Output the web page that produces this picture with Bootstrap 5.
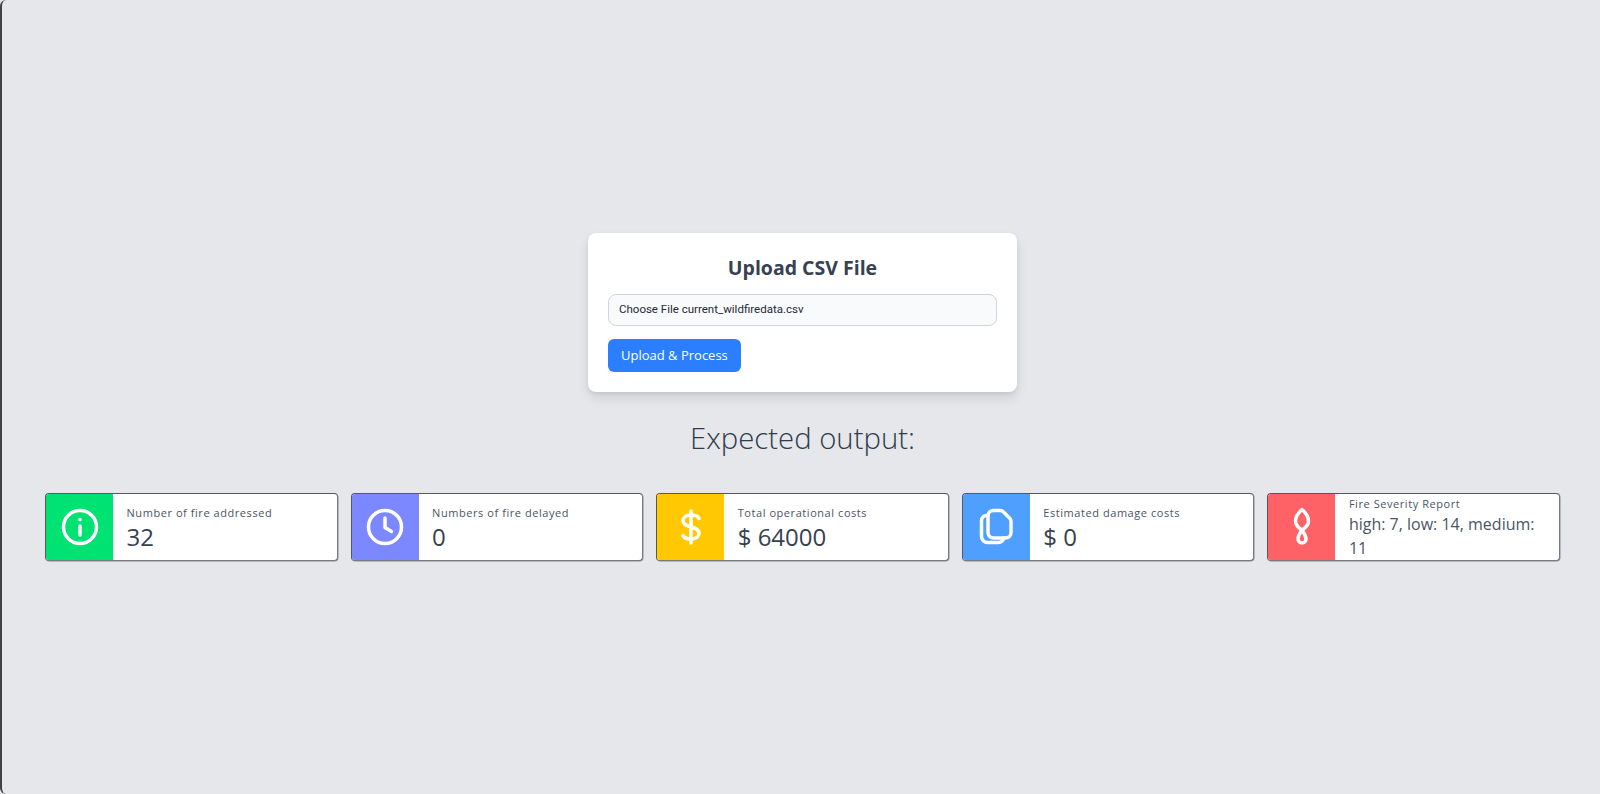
<!DOCTYPE html>
<html lang="en">
<head>
<meta charset="utf-8">
<title>Upload CSV File</title>
<link href="https://cdn.jsdelivr.net/npm/bootstrap@5.3.0/dist/css/bootstrap.min.css" rel="stylesheet">
<style>
html,body{height:100%;}
body{background:#e5e7eb;color:#374151;font-family:"Open Sans","Noto Sans",sans-serif;overflow:hidden;}
.page-shell{height:794px;border-left:2px solid #3f4145;border-radius:6px 0 0 6px;padding:0 40px 0 43px;}
.upload-box{width:429px;height:159px;background:#fff;border-radius:8px;padding:20px;box-shadow:0 6px 12px rgba(0,0,0,.1),0 2px 4px rgba(0,0,0,.06);}
.upload-title{font-size:19.5px;line-height:28px;font-weight:700;margin:1px 0 12px;color:#374151;}
.file-field{height:32px;border:1px solid #d1d5db;border-radius:8px;background:#f9fafb;padding:0 10px;font-family:Roboto,"Open Sans",sans-serif;font-size:11.5px;color:#1f2937;}
.go-btn{height:33px;padding:0 13px;background:#2b7fff;border:0;border-radius:6px;font-size:13px;color:#fff;margin-top:13px;}
.out-title{font-size:29.3px;line-height:40px;font-weight:300;margin:26px 0 35px;color:#2f3a4c;}
.stat-row{gap:13px;}
.stat-box{flex:1 1 0;height:68px;background:#fff;border:1px solid #55585e;border-right-color:#77797e;border-bottom-color:#77797e;border-radius:4px;overflow:hidden;min-width:0;box-shadow:.5px .5px 0 #8a8c90;}
.stat-icon{flex:0 0 67px;}
.stat-icon svg{fill:none;stroke:#fff;stroke-width:3.5;stroke-linecap:round;stroke-linejoin:round;}
.stat-body{padding:4px 13px 0 13.5px;min-width:0;}
.stat-body-tight{padding-top:2px;}
.stat-label{font-size:11px;line-height:16px;letter-spacing:.56px;color:#4b5563;}
.stat-value{font-size:24px;line-height:32px;color:#374151;}
.stat-value-sm{font-size:16px;line-height:24px;color:#4b5563;}
.ic-green{background:#00e272;}
.ic-violet{background:#7c88ff;}
.ic-yellow{background:#ffc800;}
.ic-blue{background:#4f9fff;}
.ic-red{background:#ff6266;}
</style>
</head>
<body>
<div class="page-shell d-flex flex-column justify-content-center align-items-center">
  <div class="upload-box">
    <h2 class="upload-title text-center">Upload CSV File</h2>
    <div class="file-field d-flex align-items-center">Choose File current_wildfiredata.csv</div>
    <button class="go-btn" type="button">Upload &amp; Process</button>
  </div>
  <h2 class="out-title text-center">Expected output:</h2>
  <div class="stat-row d-flex w-100">
    <div class="stat-box d-flex">
      <div class="stat-icon ic-green d-flex align-items-center justify-content-center">
        <svg width="38" height="38" viewBox="0 0 38 38"><circle cx="19" cy="19" r="16.500"/><path d="M19 18v9"/><path d="M19 11.500v.2"/></svg>
      </div>
      <div class="stat-body d-flex flex-column justify-content-center">
        <div class="stat-label">Number of fire addressed</div>
        <div class="stat-value">32</div>
      </div>
    </div>
    <div class="stat-box d-flex">
      <div class="stat-icon ic-violet d-flex align-items-center justify-content-center">
        <svg width="38" height="38" viewBox="0 0 38 38"><circle cx="19" cy="19" r="16.500"/><path d="M19 10v9.500l6.500 4"/></svg>
      </div>
      <div class="stat-body d-flex flex-column justify-content-center">
        <div class="stat-label">Numbers of fire delayed</div>
        <div class="stat-value">0</div>
      </div>
    </div>
    <div class="stat-box d-flex">
      <div class="stat-icon ic-yellow d-flex align-items-center justify-content-center">
        <svg width="38" height="38" viewBox="0 0 38 38"><path d="M19 3v32"/><path d="M27 10.500c-1-2.500-4-3.500-8-3.500-5 0-8 2.300-8 5.800 0 3.500 3 5 8 6.200 5 1.200 8 2.700 8 6.200 0 3.500-3 5.800-8 5.800-4 0-7-1-8-3.500"/></svg>
      </div>
      <div class="stat-body d-flex flex-column justify-content-center">
        <div class="stat-label">Total operational costs</div>
        <div class="stat-value">$ 64000</div>
      </div>
    </div>
    <div class="stat-box d-flex">
      <div class="stat-icon ic-blue d-flex align-items-center justify-content-center">
        <svg width="36" height="38" viewBox="0 0 36 38"><path d="M10 7.500h-1.500a5 5 0 0 0-5 5v16a6 6 0 0 0 6 6h11a5 5 0 0 0 5-4.500"/><path d="M10 8a5.500 5.500 0 0 1 5.500-5.500h6.500c1.500 0 2.500.5 3.500 1.500l6 6c1 1 1.500 2 1.500 3.500v11a5.500 5.500 0 0 1-5.500 5.500h-12a5.500 5.500 0 0 1-5.500-5.500z"/></svg>
      </div>
      <div class="stat-body d-flex flex-column justify-content-center">
        <div class="stat-label">Estimated damage costs</div>
        <div class="stat-value">$ 0</div>
      </div>
    </div>
    <div class="stat-box d-flex">
      <div class="stat-icon ic-red d-flex align-items-center justify-content-center">
        <svg width="18" height="40" viewBox="0 0 18 40"><path d="M9 2.500c4 3.500 6.500 7 6.500 11.500 0 3.500-2.500 6.500-6.500 9-4-2.500-6.500-5.500-6.500-9 0-4.500 2.500-8 6.500-11.500z"/><path d="M9 23c-1 2-4 5-4 9a4 4 0 0 0 8 0c0-4-3-7-4-9z"/></svg>
      </div>
      <div class="stat-body stat-body-tight d-flex flex-column justify-content-center">
        <div class="stat-label">Fire Severity Report</div>
        <div class="stat-value-sm">high: 7, low: 14, medium: 11</div>
      </div>
    </div>
  </div>
</div>
</body>
</html>
